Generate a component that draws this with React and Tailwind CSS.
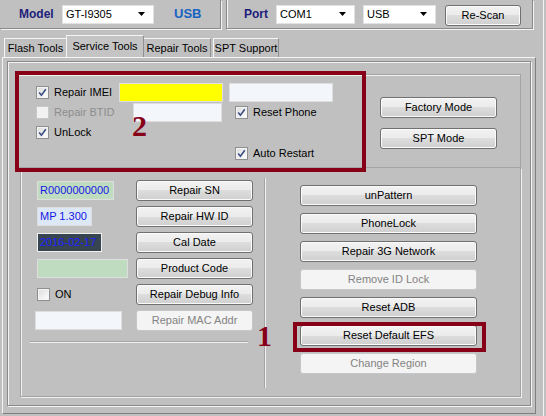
import React from "react";

// small classic-windows widgets

function Btn({ children, disabled, className = "" }) {
  return (
    <button
      type="button"
      className={`flex items-center justify-center h-[21px] rounded-[3px] border text-[11px] leading-none whitespace-nowrap ${
        disabled
          ? "bg-[#f4f4f4] border-[#c4c8ca] text-[#838383]"
          : "bg-[linear-gradient(#f2f2f2_0%,#ebebeb_50%,#dddddd_50%,#cfcfcf_100%)] border-[#707070] text-black shadow-[inset_0_0_0_1px_#fbfbfb]"
      } ${className}`}
    >
      {children}
    </button>
  );
}

function Check({ checked, disabled, label, className = "" }) {
  return (
    <div className={`flex items-center gap-[5px] whitespace-nowrap ${className}`}>
      <div
        className={`w-[13px] h-[13px] border flex items-center justify-center ${
          disabled
            ? "border-[#c8c8c8] bg-[#f2f2f2]"
            : "border-[#8e8f8f] bg-[linear-gradient(135deg,#dcdcdc,#ffffff)] shadow-[inset_0_0_0_1px_#f4f4f4]"
        }`}
      >
        {checked && (
          <svg width="9" height="9" viewBox="0 0 9 9">
            <path d="M1.2 4.6 L3.4 7.2 L7.8 1.3" fill="none" stroke="#3b4f86" strokeWidth="1.6" />
          </svg>
        )}
      </div>
      <span className={disabled ? "text-[#8d8d8d]" : "text-black"}>{label}</span>
    </div>
  );
}

function Field({ className = "", children }) {
  return (
    <div className={`h-[19px] border border-[#dedede] flex items-center px-[2px] text-[11px] whitespace-nowrap overflow-hidden ${className}`}>
      {children}
    </div>
  );
}

function Combo({ value, className = "" }) {
  return (
    <div className={`h-[19px] bg-white border border-[#e2e2e2] flex items-center justify-between pl-[3px] pr-[8px] ${className}`}>
      <span>{value}</span>
      <svg width="7" height="4" viewBox="0 0 7 4">
        <path d="M0 0 H7 L3.5 4 Z" fill="#000" />
      </svg>
    </div>
  );
}

function Tab({ label, active, className = "" }) {
  return (
    <div
      className={`flex items-center justify-center whitespace-nowrap border-t border-l border-r border-t-[#f4f4f4] border-l-[#f4f4f4] border-r-[#909090] ${
        active ? "h-[22px] bg-[#c4c4c4] z-10" : "h-[19px] bg-[#c0c0c0]"
      } ${className}`}
    >
      {label}
    </div>
  );
}

const sideButtons = [
  { label: "unPattern" },
  { label: "PhoneLock" },
  { label: "Repair 3G Network" },
  { label: "Remove ID Lock", disabled: true },
  { label: "Reset ADB" },
  { label: "Reset Default EFS" },
  { label: "Change Region", disabled: true },
];

export default function App() {
  return (
    <div className="relative w-[546px] h-[416px] bg-[#c0c0c0] flex overflow-hidden text-[11px] text-black font-['Liberation_Sans',Arial,sans-serif] select-none">
      <div className="w-[543px] flex flex-col">
        {/* connection bar */}
        <div className="h-[30px] flex">
          <div className="w-[221px] h-[29px] border-r border-b border-[#8a8a8a] shadow-[1px_1px_0_#f4f4f4] flex items-center pl-[19px]">
            <span className="w-[43px] font-bold text-[12px] text-[#1e1e7a]">Model</span>
            <Combo value="GT-I9305" className="w-[92px]" />
            <span className="ml-[20px] font-bold text-[13px] text-[#1763c4]">USB</span>
          </div>
          <div className="ml-[5px] w-[307px] h-[29px] border-l border-r border-b border-[#8a8a8a] shadow-[1px_1px_0_#f4f4f4,inset_1px_0_0_#f4f4f4] flex items-center pl-[17px]">
            <span className="w-[32px] font-bold text-[12px] text-[#1e1e7a]">Port</span>
            <Combo value="COM1" className="w-[79px]" />
            <Combo value="USB" className="ml-[8px] w-[73px]" />
            <Btn className="ml-[9px] w-[76px] mt-[2px]">Re-Scan</Btn>
          </div>
        </div>

        {/* tabs */}
        <div className="mt-[5px] h-[22px] flex items-end pl-[4px]">
          <Tab label="Flash Tools" className="w-[63px]" />
          <Tab label="Service Tools" active className="w-[78px] -ml-[1px]" />
          <Tab label="Repair Tools" className="w-[68px] -ml-[1px]" />
          <div className="w-[2px]" />
          <Tab label="SPT Support" className="w-[66px]" />
        </div>

        {/* tab page */}
        <div className="ml-[2px] w-[534px] h-[357px] border border-t-[#f4f4f4] border-l-[#f4f4f4] border-r-[#808080] border-b-[#808080] pt-[3px] pl-[4px]">
          <div className="w-[524px] h-[345px] border border-[#8a8a8a] shadow-[inset_1px_1px_0_#f4f4f4,1px_1px_0_#f4f4f4]">
            {/* options group */}
            <div className="ml-[7px] mt-[12px] w-[506px] h-[94px] border border-[#a4a4a4] shadow-[inset_1px_1px_0_#f0f0f0] flex">
              <div className="w-[364px] pt-[8px] pl-[20px]">
                <div className="h-[19px] flex items-center">
                  <Check checked label="Repair IMEI" className="w-[83px]" />
                  <Field className="w-[104px] bg-[#ffff00]" />
                  <Field className="ml-[6px] w-[104px] bg-[#f3f6fb]" />
                </div>
                <div className="h-[20px] flex items-center">
                  <Check disabled label="Repair BTID" className="w-[97px]" />
                  <Field className="w-[89px] bg-[#f3f6fb]" />
                  <Check checked label="Reset Phone" className="ml-[13px]" />
                </div>
                <div className="h-[20px] flex items-center">
                  <Check checked label="UnLock" />
                </div>
                <div className="mt-[1px] h-[20px] flex items-center">
                  <Check checked label="Auto Restart" className="ml-[199px]" />
                </div>
              </div>
              <div className="pt-[22px] flex flex-col gap-[10px]">
                <Btn className="w-[117px]">Factory Mode</Btn>
                <Btn className="w-[117px]">SPT Mode</Btn>
              </div>
            </div>

            {/* repair group */}
            <div className="ml-[12px] w-[501px] h-[229px] border-l border-r border-b border-[#a4a4a4] shadow-[inset_1px_0_0_#f0f0f0,1px_1px_0_#f0f0f0] flex">
              <div className="w-[243px] pt-[12px] pl-[16px]">
                <div className="flex flex-col gap-[5px]">
                  <div className="h-[21px] flex items-center">
                    <div className="w-[99px]">
                      <Field className="w-[77px] bg-[#c0dcc0] text-[#1616e6]">R0000000000</Field>
                    </div>
                    <Btn className="w-[117px]">Repair SN</Btn>
                  </div>
                  <div className="h-[21px] flex items-center">
                    <div className="w-[99px]">
                      <Field className="w-[55px] bg-[#dce8f5] text-[#1616e6]">MP 1.300</Field>
                    </div>
                    <Btn className="w-[117px]">Repair HW ID</Btn>
                  </div>
                  <div className="h-[21px] flex items-center">
                    <div className="w-[99px]">
                      <Field className="w-[65px] bg-[#36454f] text-[#2020ff] border-[#f0f0f0]">2016-02-17</Field>
                    </div>
                    <Btn className="w-[117px]">Cal Date</Btn>
                  </div>
                  <div className="h-[21px] flex items-center">
                    <div className="w-[99px]">
                      <Field className="w-[91px] bg-[#c0dcc0]" />
                    </div>
                    <Btn className="w-[117px]">Product Code</Btn>
                  </div>
                  <div className="h-[21px] flex items-center">
                    <div className="w-[99px]">
                      <Check label="ON" />
                    </div>
                    <Btn className="w-[117px]">Repair Debug Info</Btn>
                  </div>
                  <div className="h-[21px] flex items-center">
                    <div className="w-[99px]">
                      <Field className="-ml-[2px] w-[87px] bg-[#f3f6fb]" />
                    </div>
                    <Btn disabled className="w-[117px]">Repair MAC Addr</Btn>
                  </div>
                </div>
                <div className="mt-[10px] -ml-[7px] w-[218px] h-[2px] border-t border-b border-t-[#a4a4a4] border-b-[#f0f0f0]" />
              </div>
              <div className="mt-[10px] w-[2px] h-[210px] border-l border-r border-l-[#a4a4a4] border-r-[#f0f0f0]" />
              <div className="pl-[34px] pt-[17px] flex flex-col gap-[7px]">
                {sideButtons.map((b) => (
                  <Btn key={b.label} disabled={b.disabled} className="w-[177px]">
                    {b.label}
                  </Btn>
                ))}
              </div>
            </div>
          </div>
        </div>
      </div>
      <div className="w-px bg-[#f4f4f4]" />

      {/* callouts */}
      <div className="absolute left-[15px] top-[71px] w-[351px] h-[101px] border-4 border-[#870018]" />
      <div className="absolute left-[132px] top-[111px] text-[30px] leading-none font-bold text-[#870018] font-['Liberation_Serif',serif]">
        2
      </div>
      <div className="absolute left-[293px] top-[322px] w-[193px] h-[30px] border-4 border-[#870018]" />
      <div className="absolute left-[257px] top-[321px] text-[30px] leading-none font-bold text-[#870018] font-['Liberation_Serif',serif]">
        1
      </div>
    </div>
  );
}
